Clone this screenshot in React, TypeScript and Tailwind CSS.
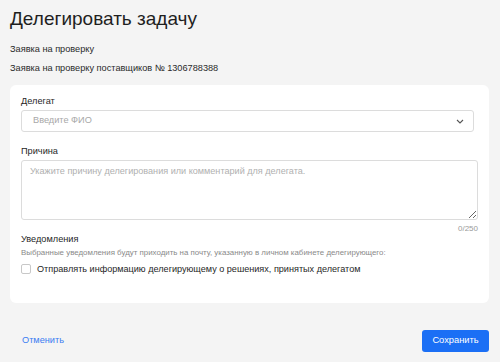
import React, { useState } from "react";

const DelegateTask: React.FC = () => {
  const [reason, setReason] = useState("");
  const [notify, setNotify] = useState(false);

  return (
    <div className="min-h-[362px] w-[500px] bg-[#f4f4f4] pl-[10px] pr-[11px] pt-[6px] text-[#1f1f1f] font-['Liberation_Sans',Arial,sans-serif]">
      <h2 className="text-[19px] leading-[26px]">Делегировать задачу</h2>

      <div className="mt-[10px] flex flex-col gap-[5px] text-[9.2px] leading-[14px] text-[#2a2a2a]">
        <p>Заявка на проверку</p>
        <p>Заявка на проверку поставщиков № 1306788388</p>
      </div>

      <div className="mt-[10px] rounded-[6px] bg-white px-[11px] pt-[10px] pb-[28px]">
        {/* Delegate select */}
        <label className="block text-[9.2px] leading-[12px]">Делегат</label>
        <div className="mt-[3px] mr-[4px] flex h-[22px] items-center justify-between rounded-[3px] border border-[#dcdcdc] pl-[11px] pr-[9px]">
          <span className="text-[9.2px] text-[#a8a8a8]">Введите ФИО</span>
          <svg width="8" height="5" viewBox="0 0 8 5" fill="none">
            <path d="M1 1l3 3 3-3" stroke="#555" strokeWidth="1.1" />
          </svg>
        </div>

        {/* Reason */}
        <label className="mt-[13px] block text-[9.2px] leading-[12px]">Причина</label>
        <textarea
          value={reason}
          onChange={(e) => setReason(e.target.value)}
          placeholder="Укажите причину делегирования или комментарий для делегата."
          className="mt-[3px] block h-[60px] w-full rounded-[3px] border border-[#dcdcdc] px-[8px] py-[4px] text-[9.1px] leading-[12px] outline-none placeholder:text-[#b0b0b0]"
        />
        <div className="mt-[4px] text-right text-[8px] leading-[10px] text-[#9a9a9a]">
          {reason.length}/250
        </div>

        {/* Notifications */}
        <div className="text-[9.2px] leading-[10px]">Уведомления</div>
        <div className="mt-[4px] text-[7.9px] leading-[10px] text-[#8a8a8a]">
          Выбранные уведомления будут приходить на почту, указанную в личном кабинете делегирующего:
        </div>
        <label className="mt-[5px] flex h-[12px] cursor-pointer items-center gap-[6px]">
          <input
            type="checkbox"
            className="sr-only"
            checked={notify}
            onChange={(e) => setNotify(e.target.checked)}
          />
          <span className="h-[10px] w-[10px] rounded-[2px] border border-[#c8c8c8] bg-white" />
          <span className="text-[9.1px] leading-[12px]">
            Отправлять информацию делегирующему о решениях, принятых делегатом
          </span>
        </label>
      </div>

      <div className="mt-[27px] flex items-center justify-between pl-[12px]">
        <button className="text-[9.2px] text-[#3b7cf2]">Отменить</button>
        <button className="h-[22px] w-[67px] rounded-[3px] bg-[#1b6ff5] text-[9.3px] text-white">
          Сохранить
        </button>
      </div>
    </div>
  );
};

export default function App() {
  return <DelegateTask />;
}
